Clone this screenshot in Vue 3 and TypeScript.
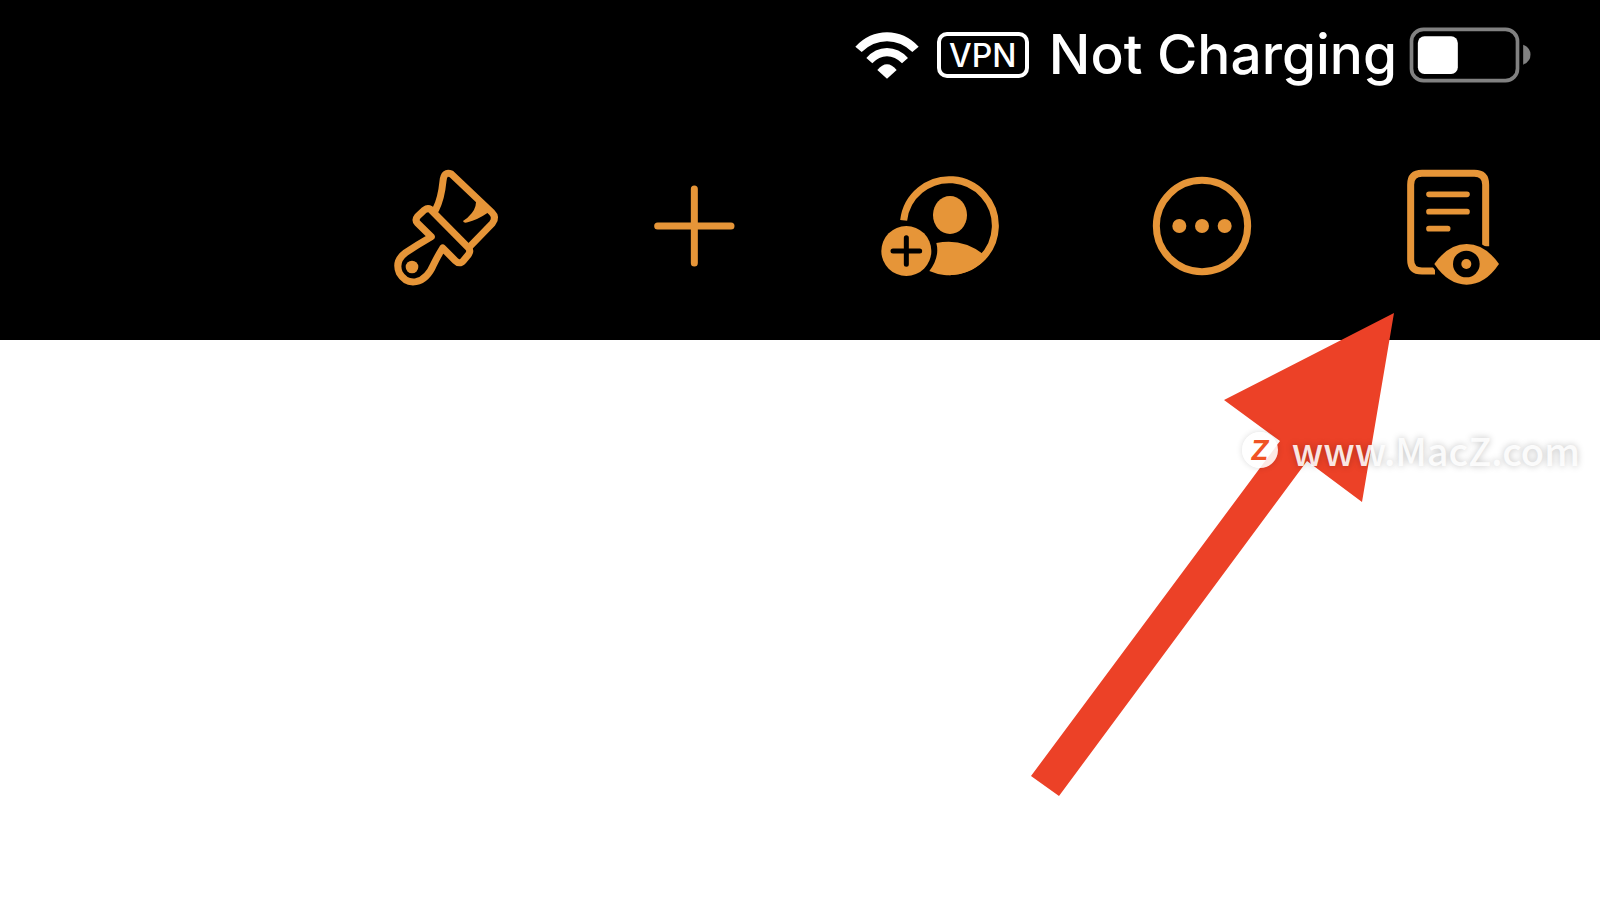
<script setup lang="ts">
import { ref } from 'vue'

const watermark = ref<string>('www.MacZ.com')
</script>

<template>
  <div class="screen">
    <header class="header">
      <div class="status">
        <svg class="wifi" viewBox="0 0 192 144" aria-label="Wi-Fi">
          <path d="M1 47Q42 4 96 4T191 47L172 63Q138 31 96 31T20 63Z" />
          <path d="M34 81Q60 51 96 51T159 81L141 97Q120 76 96 76T52 97Z" />
          <path d="M67 117Q96 83 125 117L96 143Z" />
        </svg>
        <span class="vpn">VPN</span>
        <span class="charge">Not Charging</span>
        <svg class="battery" viewBox="0 0 368 168" aria-label="Battery">
          <rect class="shell" x="7" y="7" width="318" height="154" rx="36" />
          <rect class="level" x="26" y="28" width="120" height="113" rx="20" />
          <path class="cap" d="M342 53Q364 63 364 83T342 113Z" />
        </svg>
      </div>

      <nav class="toolbar" aria-label="Document tools">
        <button class="tool brush" type="button" aria-label="Format">
          <svg viewBox="0 0 390 420">
            <g class="line">
              <path d="M167 164Q184 130 189 78Q192 47 214 57L335 172Q351 188 337 205L270 274" />
              <path d="M151 163L266 279Q273 288 265 299L250 317Q239 330 226 317L188 279Q176 298 161 328Q142 373 108 380Q76 385 58 354Q43 318 77 293Q112 269 154 245L112 204Q104 195 113 184L133 165Q143 158 151 163Z" />
            </g>
            <path class="fill" d="M287 129Q292 154 275 175Q264 189 249 198Q251 205 263 202Q292 195 321 175L336 165L290 124Z" />
            <circle class="fill" cx="96" cy="336" r="19" />
          </svg>
        </button>
        <button class="tool plus" type="button" aria-label="Insert">
          <svg viewBox="0 0 300 420">
            <path class="line" d="M163 102V324M53 213H273" />
          </svg>
        </button>
        <button class="tool person" type="button" aria-label="Collaborate">
          <svg viewBox="0 0 420 420">
            <path class="line cut" d="M101 196A138 138 0 1 1 238 350" />
            <ellipse class="fill" cx="240" cy="180" rx="51" ry="57" />
            <path class="fill" d="M199 264Q275 248 338 296L347 312A148 148 0 0 1 178 348Q210 306 199 264Z" />
            <circle class="fill" cx="109" cy="288" r="75" />
            <path class="knock" d="M109 248V328M69 288H149" />
          </svg>
        </button>
        <button class="tool more" type="button" aria-label="More">
          <svg viewBox="0 0 360 420">
            <circle class="line" cx="186" cy="213" r="137" />
            <circle class="fill" cx="118" cy="213" r="21" />
            <circle class="fill" cx="186" cy="213" r="21" />
            <circle class="fill" cx="254" cy="213" r="21" />
          </svg>
        </button>
        <button class="tool reading" type="button" aria-label="Reading view">
          <svg viewBox="0 0 390 420">
            <path class="line cut" d="M287 274V89Q287 55 253 55H96Q62 55 62 89V314Q62 348 96 348H135" />
            <path class="line thin" d="M117 118H231M117 170H231M117 221H173" />
            <path class="gap" d="M133 327Q175 267 230 267T327 327Q285 389 230 389T133 327Z" />
            <circle class="hole" cx="229" cy="327" r="40" />
            <circle class="fill" cx="229" cy="327" r="15" />
          </svg>
        </button>
      </nav>
    </header>

    <main class="page">
      <svg class="arrow" viewBox="1030 312 366 486" aria-hidden="true">
        <path d="M1394 313L1362 502L1307 461L1059 796L1031 776L1280 441L1224 400Z" />
      </svg>
      <div class="watermark">
        <span class="badge">Z</span>
        <span>{{ watermark }}</span>
      </div>
    </main>
  </div>
</template>

<style>
body {
  margin: 0;
  background: #fff;
}
</style>

<style scoped>
.screen {
  position: relative;
  min-height: 100vh;
  overflow: hidden;
  background: #fff;
  font-family: Inter, "Liberation Sans", sans-serif;
}

.header {
  box-sizing: border-box;
  padding-bottom: 45px;
  background: #000;
}

.status {
  display: flex;
  align-items: center;
  justify-content: flex-end;
  height: 110px;
  padding-right: 68px;
  color: #fff;
}

.wifi {
  width: 64px;
  height: 48px;
  margin-right: 18px;
  fill: #fff;
}

.vpn {
  box-sizing: border-box;
  width: 92px;
  height: 46px;
  margin-right: 20px;
  border: 4px solid #fff;
  border-radius: 10px;
  font-size: 32px;
  font-weight: 500;
  line-height: 40px;
  text-align: center;
}

.charge {
  margin-right: 12px;
  padding-bottom: 2px;
  font-size: 55px;
  font-weight: 500;
  line-height: 64px;
  white-space: nowrap;
}

.battery {
  width: 123px;
  height: 56px;
}

.shell {
  fill: none;
  stroke: #818181;
  stroke-width: 11;
}

.level {
  fill: #fff;
}

.cap {
  fill: #818181;
}

.toolbar {
  display: flex;
  justify-content: flex-end;
  gap: 130px;
  padding: 45px 80px 0 0;
}

.tool {
  flex: none;
  height: 140px;
  padding: 0;
  border: 0;
  background: none;
  cursor: pointer;
}

.tool svg {
  display: block;
  width: 100%;
  height: 100%;
}

.brush,
.reading {
  width: 130px;
}

.plus {
  width: 100px;
}

.person {
  width: 140px;
}

.more {
  width: 120px;
}

.line {
  fill: none;
  stroke: #e69538;
  stroke-width: 21;
  stroke-linecap: round;
  stroke-linejoin: round;
}

.cut {
  stroke-linecap: butt;
}

.thin {
  stroke-width: 17;
}

.fill {
  fill: #e69538;
}

.knock {
  fill: none;
  stroke: #000;
  stroke-width: 15;
  stroke-linecap: round;
}

.gap {
  fill: #e69538;
  stroke: #000;
  stroke-width: 18;
  paint-order: stroke;
}

.hole {
  fill: #000;
}

.arrow {
  position: absolute;
  top: 312px;
  right: 204px;
  width: 366px;
  height: 486px;
  fill: #ec4127;
}

.watermark {
  position: absolute;
  top: 422px;
  right: 20px;
  display: flex;
  align-items: center;
  gap: 14px;
  color: rgba(255, 255, 255, 0.88);
  font-family: "Noto Sans CJK SC", "Noto Sans", sans-serif;
  font-size: 38px;
  font-weight: 500;
  line-height: 56px;
  text-shadow: 0 0 7px rgba(0, 0, 0, 0.26);
}

.badge {
  width: 36px;
  height: 36px;
  border-radius: 50%;
  background: rgba(255, 255, 255, 0.88);
  box-shadow: 0 0 6px rgba(0, 0, 0, 0.14);
  color: #f05325;
  font-family: Inter, sans-serif;
  font-size: 27px;
  font-style: italic;
  font-weight: 700;
  line-height: 38px;
  text-align: center;
  text-shadow: none;
}
</style>
